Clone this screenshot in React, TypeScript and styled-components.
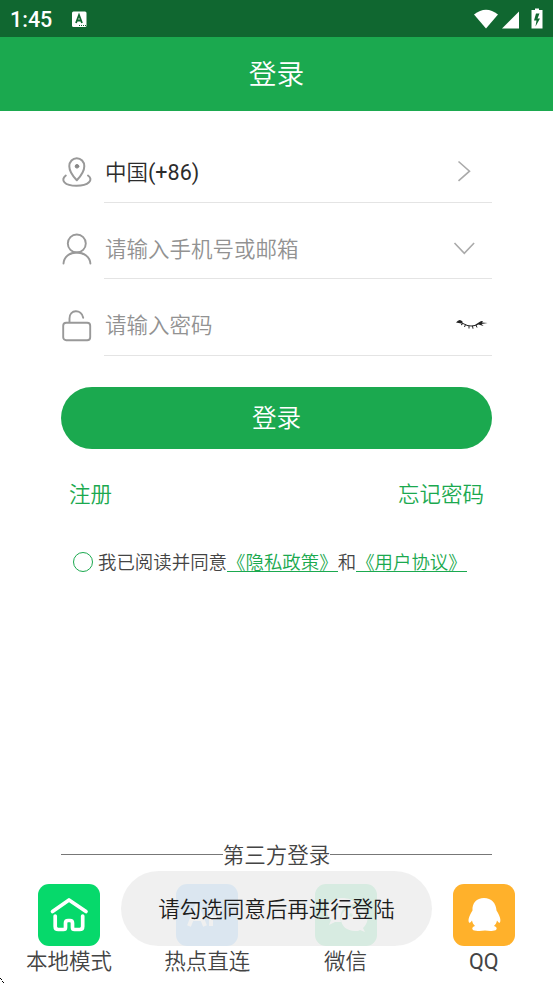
import React from "react";
import styled, { createGlobalStyle } from "styled-components";

const GREEN = "#1ba94f";

const GlobalStyle = createGlobalStyle`
  * { box-sizing: border-box; }
  html, body { margin: 0; padding: 0; background: #fff; overflow: hidden; }
  svg { display: block; flex: none; }
`;

const Screen = styled.div`
  position: relative;
  width: 553px;
  height: 983px;
  overflow: hidden;
  display: flex;
  flex-direction: column;
  background: #fff;
  color: #444;
  font-family: Roboto, "Noto Sans CJK SC DemiLight", "Noto Sans CJK SC", sans-serif;
  font-size: 21.5px;
  font-weight: 350;
  line-height: 30px;
  white-space: nowrap;
`;

const StatusBar = styled.header`
  height: 37px;
  flex: none;
  display: flex;
  align-items: center;
  padding: 1px 10px 0;
  background: #106730;
  color: #fff;
`;

const Clock = styled.span`
  width: 61px;
  padding-top: 2px;
  font-size: 21.5px;
  font-weight: 500;
`;

const StatusIcons = styled.div`
  display: flex;
  margin-left: auto;
  margin-right: -10px;
`;

const TitleBar = styled.div`
  height: 73.5px;
  flex: none;
  display: flex;
  align-items: center;
  justify-content: center;
  padding-top: 3px;
  background: ${GREEN};
  color: #fff;
  font-size: 27.7px;
`;

const Form = styled.main`
  display: flex;
  flex-direction: column;
  padding: 15.5px 61px 0;
`;

const Field = styled.div`
  height: 76.7px;
  display: flex;
  align-items: stretch;
`;

const FieldIcon = styled.div`
  width: 43px;
  padding-top: 30px;
`;

const FieldBody = styled.div<{ $filled?: boolean }>`
  flex: 1;
  display: flex;
  justify-content: space-between;
  padding: ${(p) => (p.$filled ? "31.5px" : "32px")} 0 0 1px;
  border-bottom: 1.5px solid #e4e4e4;
  color: ${(p) => (p.$filled ? "#2c2c2c" : "#929292")};
`;

const Latin = styled.span`
  font-weight: 400;
`;

const LoginButton = styled.button`
  height: 61.5px;
  margin-top: 31px;
  padding: 3px 0 0;
  border: 0;
  border-radius: 31px;
  background: ${GREEN};
  color: #fff;
  font: inherit;
  font-size: 24.6px;
`;

const LinkRow = styled.div`
  display: flex;
  justify-content: space-between;
  padding: 31px 8px 0;
  color: ${GREEN};
`;

const Agreement = styled.div`
  display: flex;
  align-items: center;
  padding: 38px 0 0 12px;
  font-size: 18.45px;
`;

const Radio = styled.span`
  width: 20px;
  height: 20px;
  margin: -1px 5px 0 0;
  border: 1px solid ${GREEN};
  border-radius: 50%;
`;

const PolicyLink = styled.span`
  height: 20px;
  margin-bottom: 2px;
  line-height: 22px;
  border-bottom: 1px solid ${GREEN};
  color: ${GREEN};
`;

const ThirdParty = styled.footer`
  margin-top: auto;
  height: 143px;
`;

const Divider = styled.div`
  height: 30px;
  display: flex;
  align-items: center;
  padding: 0 61px;
  &::before, &::after {
    content: "";
    flex: 1;
    height: 1px;
    margin-top: -1px;
    background: #777;
  }
`;

const DividerLabel = styled.span`
  padding-top: 2px;
`;

const Providers = styled.div`
  display: grid;
  grid-template-columns: repeat(4, 1fr);
  padding-top: 14px;
`;

const Provider = styled.div`
  display: flex;
  flex-direction: column;
  align-items: center;
  gap: 1px;
`;

const Toast = styled.div`
  position: absolute;
  left: 121px;
  top: 871px;
  width: 311px;
  height: 75px;
  padding-top: 2px;
  border-radius: 37.5px;
  display: flex;
  align-items: center;
  justify-content: center;
  background: rgba(238, 238, 238, 0.89);
  color: #1c1c1c;
`;

const Corner = styled.svg`
  position: absolute;
  left: 0;
  bottom: 0;
`;

const PinIcon = () => (
  <svg width="32" height="34" viewBox="0 0 32 34" fill="none" stroke="#999" strokeWidth="2" strokeLinecap="round">
    <path d="M15.800 24.300C12.500 20.800 8.300 15.800 8.300 10.200a7.500 8 0 0 1 15 0c0 5.600-4.200 10.600-7.500 14.100z" strokeLinejoin="round" />
    <circle cx="16" cy="10.300" r="1.800" fill="#888" stroke="#888" strokeWidth="1" />
    <path d="M4.800 19.500C-1 24 3.500 29.800 15.500 29.800s17.500-6 11.500-10.300" />
  </svg>
);

const UserIcon = () => (
  <svg width="32" height="34" viewBox="0 0 32 34" fill="none" stroke="#999" strokeWidth="1.900" strokeLinecap="round">
    <circle cx="15.800" cy="10.500" r="9" />
    <path d="M2.500 30.500c.5-6.500 6-11 13.200-11S28.900 24 29.400 30.500" />
  </svg>
);

const LockIcon = () => (
  <svg width="32" height="34" viewBox="0 0 32 34" fill="none" stroke="#999" strokeWidth="1.900" strokeLinecap="round">
    <rect x="2.200" y="13.700" width="27" height="17.500" rx="3" />
    <path d="M8.500 13V9.500c0-9.500 12-9.500 13.700-.8" />
  </svg>
);

const Chevron = ({ down = false }: { down?: boolean }) => (
  <svg width="47" height="24" viewBox="0 0 47 24" fill="none" stroke="#aaa" strokeWidth="1.600">
    <path d={down ? "M9.500 8l9.800 10.300 9.800-10.300" : "M13.500 3.500l11 9.700-11 9.700"} />
  </svg>
);

const LashIcon = () => (
  <svg width="38" height="24" viewBox="0 0 38 24" fill="none" stroke="#222">
    <path d="M2 11.500Q5.500 7 8.500 10.500q-.5 1.500 1 1.700 9 5 16-1.200 2-1.500 3.500-.7l-1 1.200 5.500.5-6 1 2 2-5-1.500Q17 18 8.500 12.700z" fill="#222" stroke="none" />
    <path d="M9 12.500l-2 1.500M11.500 13.500l-1 2.500M15 15v2.500M18.500 15l.5 2.700M22 14l1 2.500" />
  </svg>
);

const HomeTile = () => (
  <svg width="62" height="62" viewBox="0 0 62 62" fill="none">
    <rect width="62" height="62" rx="11" fill="#06d96b" />
    <path d="M14.500 27.500L31 16l17 11.500M17.200 32v10.500q0 3 3 3h5.300q2 0 2-2v-4.500q0-2.500 2.500-2.500h2q2.500 0 2.500 2.500v4.500q0 2 2 2h5.200q3 0 3-3V32" stroke="#fff" strokeWidth="3.700" strokeLinecap="round" strokeLinejoin="round" />
  </svg>
);

const ApTile = () => (
  <svg width="62" height="62" viewBox="0 0 62 62" fill="none">
    <rect width="62" height="62" rx="11" fill="#46a6ff" />
    <path d="M13 42l8-20 8 20M16 35h10M35 42V22h3a6 6 0 0 1 0 12h-3" stroke="#fff" strokeWidth="4" />
  </svg>
);

const WechatTile = () => (
  <svg width="62" height="62" viewBox="0 0 62 62" fill="#fff">
    <rect width="62" height="62" rx="11" fill="#20ce73" />
    <path d="M27 14c-9 0-15 6-15 13 0 4 2 7 4 9l-2 5 6-3h6c-3-12 6-18 15-18-2-4-8-6-14-6z" />
    <path d="M40 23c-8 0-14 5-14 12s6 12 14 12c2 0 4 0 5-1l5 2-2-4c9-8 4-21-8-21z" />
    <g fill="#20ce73"><circle cx="22" cy="23" r="2" /><circle cx="32" cy="23" r="2" /><circle cx="36" cy="31" r="1.800" /><circle cx="45" cy="31" r="1.800" /></g>
  </svg>
);

const QqTile = () => (
  <svg width="62" height="62" viewBox="0 0 62 62" fill="#fff">
    <rect width="62" height="62" rx="11" fill="#ffb12b" />
    <path d="M31 14c-7.500 0-12 5-11.500 12.500-3 5-4.800 9-3.500 12 1 1 2-.5 3-2 .5 2.500 1.500 4 3 5.500-4 1.500-3.500 4.500 1 4.800 3 .3 6 .2 9-.3 3 .5 6 .6 8 .3 4.500-.3 5-3.300 1-4.800 1.500-1.500 2.500-3 3-5.500 1 1.500 2 3 3 2 1.300-3-.5-7-3.500-12C43 19 38.500 14 31 14z" />
  </svg>
);

const providers = [
  { label: "本地模式", Icon: HomeTile },
  { label: "热点直连", Icon: ApTile },
  { label: "微信", Icon: WechatTile },
  { label: <Latin>QQ</Latin>, Icon: QqTile },
];

export default function App() {
  return (
    <Screen>
      <GlobalStyle />
      <StatusBar>
        <Clock>1:45</Clock>
        <svg width="16" height="17" viewBox="0 0 16 17">
          <rect x="1" y=".5" width="14.500" height="15.500" rx="1.500" fill="#fff" />
          <path d="M5 12l3-8 3 8M6 9.500h4" stroke="#106730" strokeWidth="1.800" fill="none" />
          <path d="M8 14.500h7" stroke="#106730" strokeDasharray="1 1" />
        </svg>
        <StatusIcons>
          <svg width="82" height="24" viewBox="471 6 82 24" fill="#fff">
            <path d="M474 13.500Q486 4 498 13.500L486 27.500z" />
            <path d="M519 10.500v17H502z" />
            <path d="M532 9h3V7.500h4V9h3.500v18.500H531.500V9z" />
            <path d="M536 12.500l-2 7h2.500l-1 6 4.500-8h-2.500l2-5z" fill="#106730" />
          </svg>
        </StatusIcons>
      </StatusBar>
      <TitleBar>登录</TitleBar>
      <Form>
        <Field>
          <FieldIcon><PinIcon /></FieldIcon>
          <FieldBody $filled><span>中国<Latin>(+86)</Latin></span><Chevron /></FieldBody>
        </Field>
        <Field>
          <FieldIcon><UserIcon /></FieldIcon>
          <FieldBody><span>请输入手机号或邮箱</span><Chevron down /></FieldBody>
        </Field>
        <Field>
          <FieldIcon><LockIcon /></FieldIcon>
          <FieldBody><span>请输入密码</span><LashIcon /></FieldBody>
        </Field>
        <LoginButton>登录</LoginButton>
        <LinkRow><span>注册</span><span>忘记密码</span></LinkRow>
        <Agreement>
          <Radio />
          <span>我已阅读并同意</span>
          <PolicyLink>《隐私政策》</PolicyLink>
          <span>和</span>
          <PolicyLink>《用户协议》</PolicyLink>
        </Agreement>
      </Form>
      <ThirdParty>
        <Divider><DividerLabel>第三方登录</DividerLabel></Divider>
        <Providers>
          {providers.map(({ label, Icon }, i) => (
            <Provider key={i}><Icon /><span>{label}</span></Provider>
          ))}
        </Providers>
      </ThirdParty>
      <Toast>请勾选同意后再进行登陆</Toast>
      <Corner width="6" height="6" viewBox="0 0 6 6">
        <path d="M0 1.500h1M1 2.500h1M2 4.500h1M3 5.500h1" stroke="#000" />
      </Corner>
    </Screen>
  );
}
